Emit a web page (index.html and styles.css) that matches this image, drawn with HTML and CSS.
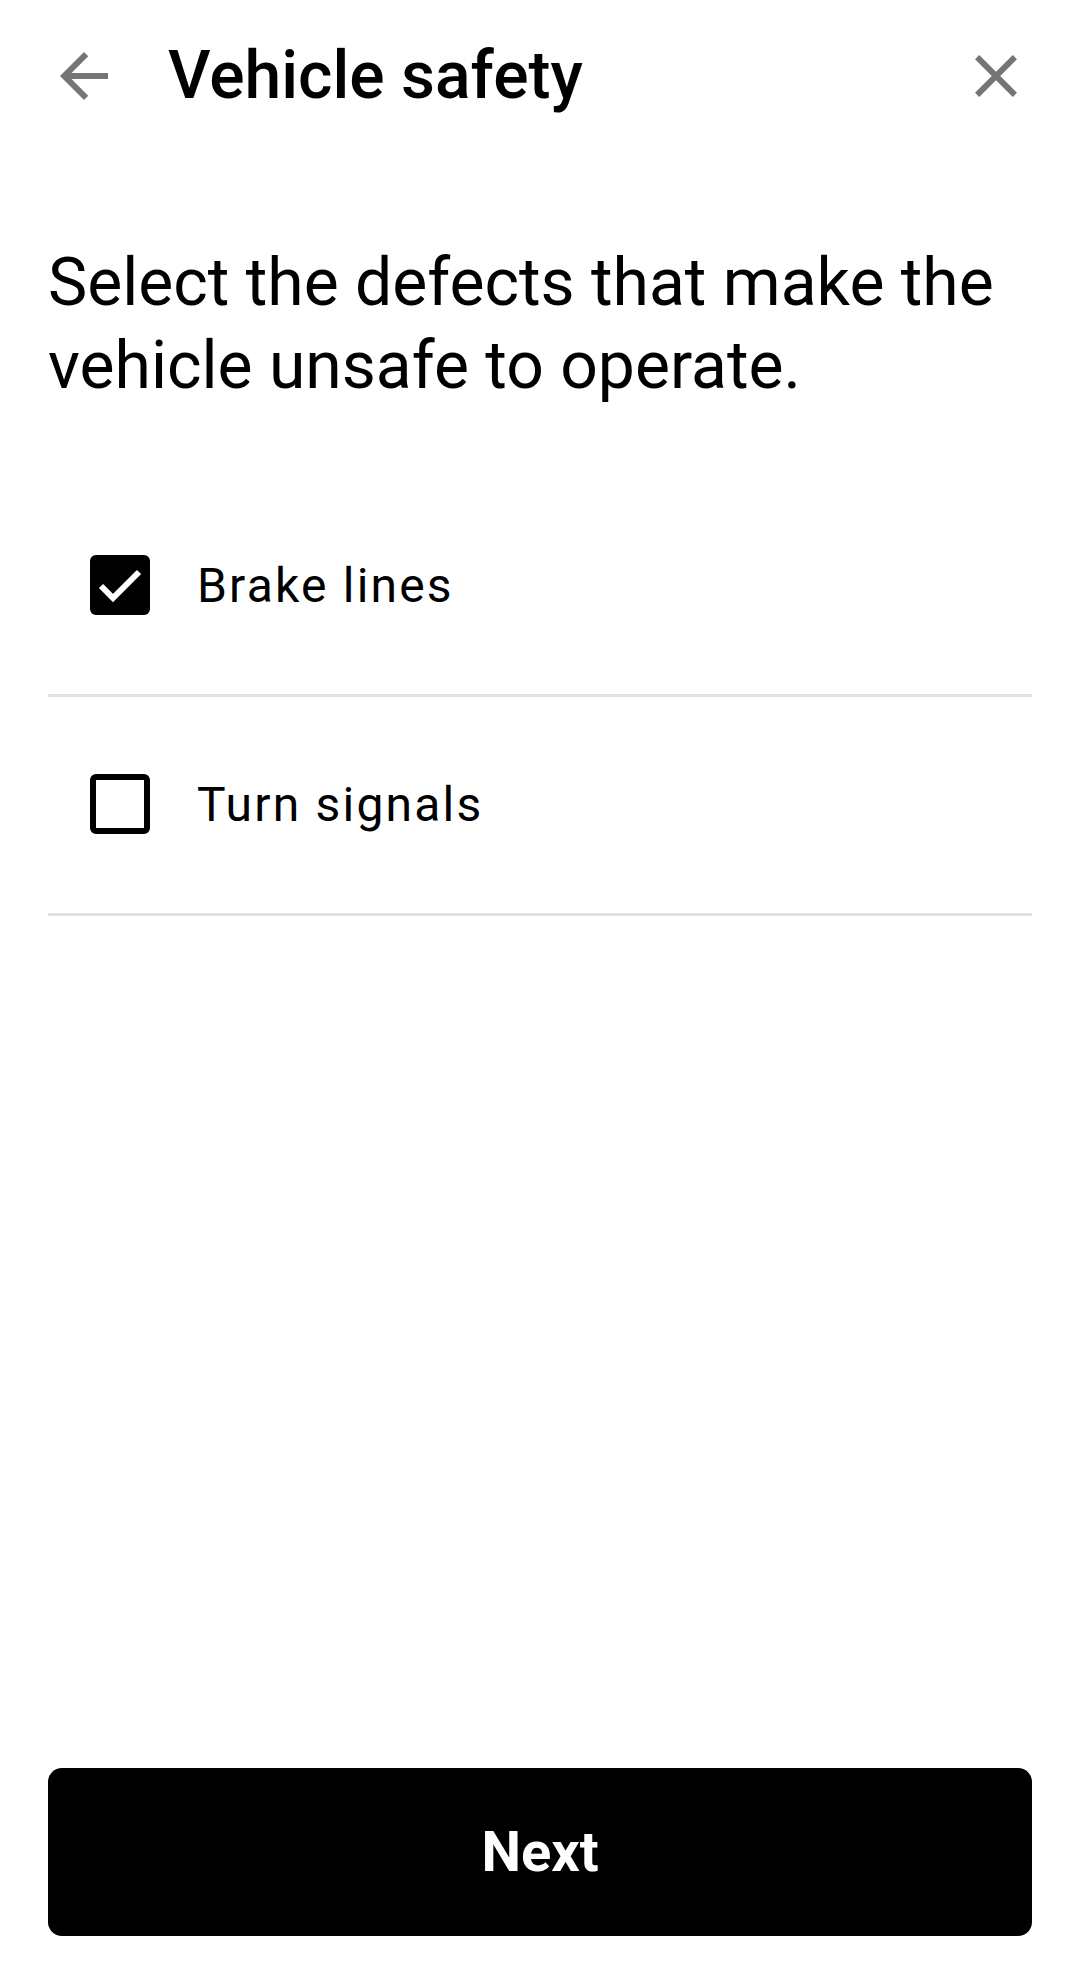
FILE: index.html
```html
<!DOCTYPE html>
<html lang="en">
<head>
<meta charset="utf-8">
<title>Vehicle safety</title>
<link rel="stylesheet" href="styles.css">
</head>
<body>
<div class="screen">
  <header class="app-bar">
    <button class="icon-btn" aria-label="Back">
      <svg viewBox="0 0 24 24" width="72" height="72"><path d="M20 11H7.830l5.59-5.59L12 4l-8 8 8 8 1.410-1.41L7.830 13H20v-2z"/></svg>
    </button>
    <h1 class="title">Vehicle safety</h1>
    <button class="icon-btn" aria-label="Close">
      <svg viewBox="0 0 24 24" width="72" height="72"><path d="M19 6.41L17.59 5 12 10.59 6.41 5 5 6.41 10.59 12 5 17.59 6.41 19 12 13.41 17.59 19 19 17.59 13.41 12z"/></svg>
    </button>
  </header>

  <main class="content">
    <p class="prompt">Select the defects that make the vehicle unsafe to operate.</p>
    <ul class="options">
      <li class="option">
        <span class="checkbox checked">
          <svg viewBox="0 0 60 60" width="60" height="60"><polyline points="11,31 23,43 49,17" fill="none" stroke="#fff" stroke-width="6"/></svg>
        </span>
        <span class="label">Brake lines</span>
      </li>
      <li class="option">
        <span class="checkbox"></span>
        <span class="label">Turn signals</span>
      </li>
    </ul>
  </main>

  <footer class="actions">
    <button class="primary-btn">Next</button>
  </footer>
</div>
</body>
</html>
```

FILE: styles.css
```css
* {
  box-sizing: border-box;
}

html, body {
  margin: 0;
  padding: 0;
  background: #ffffff;
}

body {
  font-family: Roboto, "Noto Sans", "Liberation Sans", sans-serif;
  color: #000000;
}

.screen {
  display: flex;
  flex-direction: column;
  min-height: 1968px;
}

.app-bar {
  display: flex;
  align-items: center;
  padding: 40px 48px 0 48px;
  height: 112px;
}

.icon-btn {
  width: 72px;
  height: 72px;
  padding: 0;
  border: none;
  background: transparent;
  display: flex;
  align-items: center;
  justify-content: center;
  flex: none;
}

.icon-btn svg {
  fill: #757575;
  display: block;
}

.title {
  flex: 1;
  margin: 0 0 0 48px;
  font-size: 66px;
  font-weight: 500;
  line-height: 72px;
  color: #000000;
}

.content {
  flex: 1;
  padding: 0 48px;
}

.prompt {
  margin: 129px 0 0 0;
  font-size: 66px;
  font-weight: 400;
  line-height: 83px;
  color: #000000;
}

.options {
  list-style: none;
  margin: 71px 0 0 0;
  padding: 0;
}

.option {
  display: flex;
  align-items: center;
  height: 219px;
  border-bottom: 3px solid #e0e0e0;
  padding-left: 42px;
}

.checkbox {
  width: 60px;
  height: 60px;
  border: 6px solid #000000;
  border-radius: 6px;
  flex: none;
  margin-top: -3px;
}

.checkbox.checked {
  background: #000000;
  border: none;
}

.checkbox svg {
  display: block;
}

.label {
  margin-left: 47px;
  font-size: 48px;
  letter-spacing: 2.2px;
  line-height: 56px;
  color: #000000;
}

.actions {
  padding: 0 48px 32px 48px;
}

.primary-btn {
  width: 100%;
  height: 168px;
  border: none;
  border-radius: 14px;
  background: #000000;
  color: #ffffff;
  font-family: Roboto, "Noto Sans", "Liberation Sans", sans-serif;
  font-size: 56px;
  font-weight: 700;
  display: flex;
  align-items: center;
  justify-content: center;
  padding: 0;
}
```
